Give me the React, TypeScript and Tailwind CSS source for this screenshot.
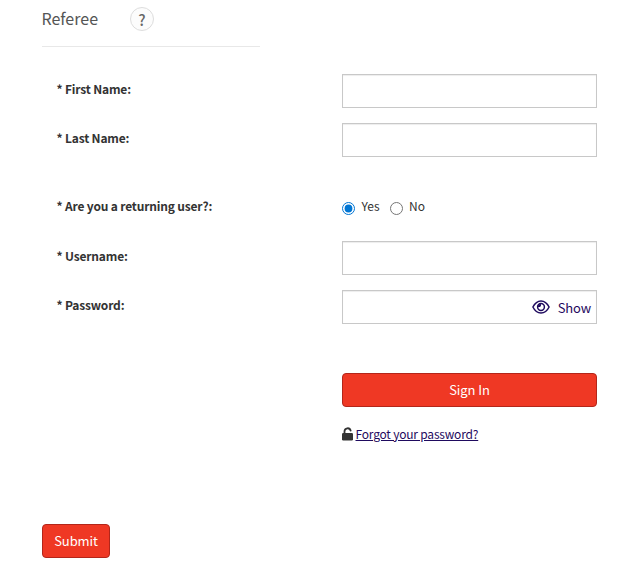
import type { ReactNode } from 'react'

const inputClass =
  'block h-[34px] w-full border border-[#c8c8c8] bg-white px-3 text-[13px] shadow-[inset_0_1px_1px_rgba(0,0,0,0.075)] outline-none'

/** One form line: label on the left, control on the right. */
function Row({ label, id, children }: { label: string; id?: string; children: ReactNode }) {
  return (
    <div className="flex h-[34px]">
      <label
        htmlFor={id}
        className="w-[300px] shrink-0 pt-[6px] pl-[14.5px] text-[12px] leading-[18px] font-bold tracking-[-0.17px]"
      >
        * {label}:
      </label>
      <div className="w-[255px]">{children}</div>
    </div>
  )
}

function Radio({ label, checked = false }: { label: string; checked?: boolean }) {
  return (
    <label className="flex items-center gap-[6.5px]">
      <input
        type="radio"
        name="returning"
        defaultChecked={checked}
        className="mt-[4px] h-[13px] w-[13px] accent-[#0075d3]"
      />
      <span className="text-[12px] leading-[18px]">{label}</span>
    </label>
  )
}

function EyeIcon() {
  return (
    <svg width="18" height="16" viewBox="0 0 18 16" fill="none" stroke="currentColor">
      <path
        d="M.9 8C2.8 4.2 5.7 1.9 9 1.9s6.2 2.3 8.1 6.1c-1.9 3.8-4.8 6.1-8.1 6.1S2.8 11.8.9 8Z"
        strokeWidth="1.5"
        strokeLinejoin="round"
      />
      <circle cx="9" cy="8" r="3.4" strokeWidth="1.5" />
      <path d="M9 4.9v1.3C9 7.4 8.2 8 7.2 8H5.8A3.2 3.2 0 0 1 9 4.9Z" fill="currentColor" stroke="none" />
    </svg>
  )
}

function UnlockIcon() {
  return (
    <svg width="12" height="14" viewBox="0 0 12 14" fill="none" className="-mt-[2px]">
      <rect x="0" y="6" width="11" height="7.4" rx="1.2" fill="#333" />
      <path d="M2.5 6.5V4.4a3.1 3.1 0 0 1 6.1-.8" stroke="#333" strokeWidth="1.8" strokeLinecap="round" />
    </svg>
  )
}

export default function App() {
  return (
    <form
      onSubmit={(e) => e.preventDefault()}
      className="h-[566px] w-[638px] overflow-hidden bg-white pt-[7px] pl-[42px] font-['Noto_Sans_CJK_SC',sans-serif] text-[#333]"
    >
      <header className="flex h-10 w-[218px] items-start border-b border-[#e8e8e8]">
        <h1 className="-mt-px -ml-[0.5px] w-[88.5px] text-[16px] leading-6 text-[#555]">Referee</h1>
        <button
          type="button"
          className="grid h-6 w-6 place-items-center rounded-full border border-[#ddd] bg-[#fcfcfc] text-[15px] leading-none font-medium text-[#666]"
        >
          ?
        </button>
      </header>

      <div className="mt-[27px] flex flex-col gap-[15px]">
        <Row label="First Name" id="first">
          <input id="first" className={inputClass} />
        </Row>
        <Row label="Last Name" id="last">
          <input id="last" className={inputClass} />
        </Row>
      </div>

      <div className="mt-[34px]">
        <Row label="Are you a returning user?">
          <div className="flex gap-[10px] pt-[6px]">
            <Radio label="Yes" checked />
            <Radio label="No" />
          </div>
        </Row>
      </div>

      <div className="mt-[16px] flex flex-col gap-[15px]">
        <Row label="Username" id="user">
          <input id="user" className={inputClass} />
        </Row>
        <Row label="Password" id="pass">
          <div className="flex h-[34px] items-center justify-end border border-[#c8c8c8] pr-[5px] text-[#1f0a5e] shadow-[inset_0_1px_1px_rgba(0,0,0,0.075)]">
            <input id="pass" type="password" className="min-w-0 flex-1 px-3 outline-none" />
            <button
              type="button"
              className="flex items-center gap-[8px] text-[13px] leading-5 tracking-[-0.15px]"
            >
              <EyeIcon />
              <span className="pt-[2px]">Show</span>
            </button>
          </div>
        </Row>
      </div>

      <div className="mt-[49px] ml-[300px] w-[255px]">
        <button className="block h-[34px] w-full rounded-[4px] border border-[#b3261a] bg-[#ef3824] text-[13px] leading-5 tracking-[-0.1px] text-white">
          Sign In
        </button>
        <div className="mt-[19px] flex items-center gap-[2px]">
          <UnlockIcon />
          <a
            href="#"
            className="-mt-px -ml-[0.5px] text-[12px] leading-[18px] tracking-[-0.2px] text-[#1f0a5e] underline"
          >
            Forgot your password?
          </a>
        </div>
      </div>

      <button className="mt-[81px] block h-[34px] w-[68px] rounded-[4px] border border-[#b3261a] bg-[#ef3824] text-[13px] leading-5 tracking-[-0.1px] text-white">
        Submit
      </button>
    </form>
  )
}
